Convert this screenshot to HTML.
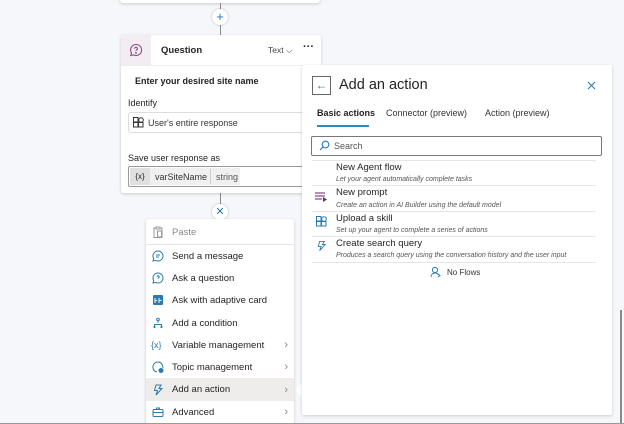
<!DOCTYPE html>
<html style="width:624px;height:424px;overflow:hidden"><head><style>
*{box-sizing:border-box;margin:0;padding:0}
body{width:624px;height:424px;overflow:hidden;background:#f5f7fa;font-family:"Liberation Sans",sans-serif;color:#242424;position:relative;font-size:9px}
.a{position:absolute}
.card{background:#fff;box-shadow:0 1px 3px rgba(0,0,0,.18);border-radius:3px}
.row{position:absolute;left:0;width:148px;height:22px;display:flex;align-items:center;font-size:9.5px}
.row svg{margin-left:6px;margin-right:8px;flex:none}
.row .ch{position:absolute;right:6px;color:#888;font-size:11px}
.t{font-size:9.5px;position:absolute;left:336px}
.d{font-size:7px;font-style:italic;color:#555;position:absolute;left:336px}
.sep{position:absolute;left:312px;width:284px;height:1px;background:#e6e6e6}
</style></head><body>
<div class="a card" style="left:120px;top:-10px;width:200px;height:13px"></div>
<div class="a" style="left:220px;top:3px;width:1px;height:210px;background:#8a8a8a"></div>
<div class="a" style="left:212px;top:9px;width:16px;height:16px;border-radius:50%;background:#fff;box-shadow:0 0 2px rgba(0,0,0,.3);color:#2a7ab0;text-align:center;line-height:15px;font-size:13px">+</div>

<div class="a card" style="left:121px;top:35px;width:200px;height:158px">
 <div class="a" style="left:0;top:0;width:30px;height:30px;background:#f3ecf3"></div>
 <svg class="a" style="left:8px;top:8px" width="14" height="14" viewBox="0 0 14 14" fill="none" stroke="#8a4a8a" stroke-width="1.1"><path d="M7 1.5a5.5 5.5 0 1 1-2.6 10.3L1.8 12.5l.7-2.5A5.5 5.5 0 0 1 7 1.5z"/><path d="M5.6 5.6a1.4 1.4 0 1 1 2 1.3c-.5.3-.6.6-.6 1"/><circle cx="7" cy="9.8" r=".4" fill="#8a4a8a"/></svg>
 <div class="a" style="left:40px;top:10px;font-size:9.5px;font-weight:bold">Question</div>
 <div class="a" style="left:147px;top:10px;font-size:8.5px;color:#444">Text ⌵</div>
 <div class="a" style="left:182px;top:6px;font-size:11px;font-weight:bold">···</div>
 <div class="a" style="left:0;top:30px;width:200px;height:1px;background:#eee"></div>
 <div class="a" style="left:14px;top:41px;font-size:9px;font-weight:bold">Enter your desired site name</div>
 <div class="a" style="left:7px;top:63px;font-size:9px">Identify</div>
 <div class="a" style="left:7px;top:77px;width:200px;height:21px;border:1px solid #ddd;border-radius:3px"></div>
 <svg class="a" style="left:12px;top:82px" width="11" height="11" viewBox="0 0 11 11" fill="none" stroke="#333" stroke-width="1"><rect x=".5" y="5.5" width="4.5" height="4.5"/><rect x="5.5" y="5.5" width="4.5" height="4.5"/><rect x=".5" y=".5" width="4.5" height="4.5"/><circle cx="8" cy="3" r="2.3"/></svg>
 <div class="a" style="left:27px;top:83px;font-size:9px;color:#333">User's entire response</div>
 <div class="a" style="left:7px;top:118px;font-size:9px">Save user response as</div>
 <div class="a" style="left:7px;top:131px;width:200px;height:21px;border:1px solid #999;border-radius:2px"></div>
 <div class="a" style="left:9px;top:133px;width:110px;height:17px;background:#f0f0f0"></div>
 <div class="a" style="left:9px;top:133px;width:20px;height:17px;background:#e0e0e0;font-size:8px;text-align:center;line-height:17px">{x}</div>
 <div class="a" style="left:34px;top:137px;font-size:9px;color:#333">varSiteName</div>
 <div class="a" style="left:89px;top:134px;width:1px;height:15px;background:#ccc"></div>
 <div class="a" style="left:95px;top:137px;font-size:9px;color:#555">string</div>
</div>

<div class="a" style="left:212px;top:204px;width:16px;height:16px;border-radius:50%;background:#fff;box-shadow:0 0 2px rgba(0,0,0,.3);color:#2a7ab0;text-align:center;line-height:16px;font-size:11px">✕</div>

<div class="a card" style="left:146px;top:219px;width:148px;height:210px;border-radius:3px">
 <div class="row" style="top:2px;color:#888"><svg width="12" height="12" viewBox="0 0 12 12" fill="none" stroke="#999"><rect x="2" y="2" width="8" height="9.5"/><rect x="4" y="1" width="4" height="2" fill="#fff"/><rect x="5.5" y="5" width="4" height="6"/></svg>Paste</div>
 <div class="a" style="left:0;top:25px;width:148px;height:1px;background:#e6e6e6"></div>
 <div class="row" style="top:26px"><svg width="12" height="12" viewBox="0 0 12 12" fill="none" stroke="#2a7ab0"><path d="M6 1a5 5 0 1 1-2.4 9.4L1 11l.7-2.4A5 5 0 0 1 6 1z"/><path d="M4 5h4M4 7h3"/></svg>Send a message</div>
 <div class="row" style="top:48px"><svg width="12" height="12" viewBox="0 0 12 12" fill="none" stroke="#2a7ab0"><path d="M6 1a5 5 0 1 1-2.4 9.4L1 11l.7-2.4A5 5 0 0 1 6 1z"/><path d="M5 4.8a1.1 1.1 0 1 1 1.5 1c-.4.2-.5.5-.5.8M6 8.2v.3"/></svg>Ask a question</div>
 <div class="row" style="top:70px"><svg width="12" height="12" viewBox="0 0 12 12"><rect x="1" y="1" width="10" height="10" rx="1" fill="#2a7ab0"/><path d="M3 4v5M3 6.5h2M7 4v5M7 6.5h2.5" stroke="#fff" stroke-width="1"/></svg>Ask with adaptive card</div>
 <div class="row" style="top:93px"><svg width="12" height="12" viewBox="0 0 12 12" fill="none" stroke="#2a7ab0"><circle cx="6" cy="2.5" r="1.3"/><path d="M6 3.8v2M2.5 10V7.5h7V10"/><circle cx="2.5" cy="10" r=".6"/><circle cx="9.5" cy="10" r=".6"/></svg>Add a condition</div>
 <div class="row" style="top:115px"><span style="margin-left:5px;margin-right:7px;color:#2a7ab0;font-size:9px;width:14px">{x}</span>Variable management<span class="ch">›</span></div>
 <div class="row" style="top:137px"><svg width="12" height="12" viewBox="0 0 12 12" fill="none" stroke="#2a7ab0"><path d="M6 1a5 5 0 0 1 4.8 6M5 11a5 5 0 0 1-4-4A5 5 0 0 1 6 1"/><circle cx="9" cy="9.5" r="2" fill="#2a7ab0"/></svg>Topic management<span class="ch">›</span></div>
 <div class="row" style="top:159px;background:#eeedec;height:23px"><svg width="12" height="12" viewBox="0 0 12 12" fill="none" stroke="#2a7ab0"><path d="M4 1h5L7 4.5h3L4 11l1.5-4.5H2.5z"/></svg>Add an action<span class="ch">›</span></div>
 <div class="row" style="top:182px"><svg width="12" height="12" viewBox="0 0 12 12" fill="none" stroke="#2a7ab0"><rect x="1" y="3.5" width="10" height="7" rx="1"/><path d="M4.5 3.5V2h3v1.5M1 6.5h10"/></svg>Advanced<span class="ch">›</span></div>
</div>
<div class="a" style="left:295px;top:383px;width:0;height:0;border-top:7px solid transparent;border-bottom:7px solid transparent;border-right:7px solid #fff"></div>
<div class="a" style="left:0;top:423px;width:624px;height:1px;background:#999;z-index:5"></div>

<div class="a card" style="left:302px;top:65px;width:310px;height:350px;border-radius:2px"></div>
<div class="a" style="left:312px;top:76px;width:19px;height:19px;border:1px solid #666;color:#2a7ab0;font-size:12px;text-align:center;line-height:16px">←</div>
<div class="a" style="left:339px;top:77px;font-size:14.5px">Add an action</div>
<svg class="a" style="left:587px;top:81px" width="9" height="9" viewBox="0 0 9 9" stroke="#2a7ab0" stroke-width="1.1"><path d="M1 1l7 7M8 1L1 8"/></svg>
<div class="a" style="left:317px;top:108px;font-size:9px;font-weight:bold">Basic actions</div>
<div class="a" style="left:317px;top:125px;width:52px;height:2px;background:#2a8ab8"></div>
<div class="a" style="left:386px;top:108px;font-size:9px;color:#333">Connector (preview)</div>
<div class="a" style="left:485px;top:108px;font-size:9px;color:#333">Action (preview)</div>
<div class="a" style="left:311px;top:136px;width:291px;height:20px;border:1px solid #777;border-radius:2px"></div>
<svg class="a" style="left:319px;top:140px" width="11" height="11" viewBox="0 0 11 11" fill="none" stroke="#2a7ab0" stroke-width="1.1"><circle cx="6.5" cy="4.5" r="3.3"/><path d="M4.2 6.8L1 10"/></svg>
<div class="a" style="left:334px;top:141px;font-size:9px;color:#555">Search</div>
<div class="sep" style="top:160px"></div>
<div class="t" style="top:162px">New Agent flow</div><div class="d" style="top:176px">Let your agent automatically complete tasks</div>
<div class="sep" style="top:185px"></div>
<svg class="a" style="left:315px;top:192px" width="13" height="10" viewBox="0 0 13 10"><path d="M0 1h10M0 4h10M0 7h7" stroke="#8a4a8a" stroke-width="1.3"/><path d="M8 5l4 2.5L8 10z" fill="#6a2a6a"/></svg>
<div class="t" style="top:187px">New prompt</div><div class="d" style="top:202px">Create an action in AI Builder using the default model</div>
<div class="sep" style="top:211px"></div>
<svg class="a" style="left:316px;top:216px" width="11" height="11" viewBox="0 0 11 11" fill="none" stroke="#2a7ab0" stroke-width="1"><rect x=".5" y="5.5" width="4.5" height="4.5"/><rect x="5.5" y="5.5" width="4.5" height="4.5"/><rect x=".5" y=".5" width="4.5" height="4.5"/><circle cx="8" cy="3" r="2.3"/></svg>
<div class="t" style="top:213px">Upload a skill</div><div class="d" style="top:227px">Set up your agent to complete a series of actions</div>
<div class="sep" style="top:236px"></div>
<svg class="a" style="left:316px;top:240px" width="11" height="12" viewBox="0 0 12 12" fill="none" stroke="#2a7ab0"><path d="M4 1h5L7 4.5h3L4 11l1.5-4.5H2.5z"/></svg>
<div class="t" style="top:238px">Create search query</div><div class="d" style="top:252px">Produces a search query using the conversation history and the user input</div>
<div class="sep" style="top:262px"></div>
<svg class="a" style="left:430px;top:266px" width="12" height="12" viewBox="0 0 12 12" fill="none" stroke="#2a7ab0"><circle cx="5" cy="4" r="2.6"/><path d="M1 11c0-2.5 2-4 4-4s3 .8 3.5 2M8 11l2-1.5-2-1.5"/></svg>
<div class="a" style="left:447px;top:268px;font-size:8px;color:#333">No Flows</div>
<div class="a" style="left:620px;top:310px;width:2px;height:114px;background:#8a8a8a"></div>
</body></html>
